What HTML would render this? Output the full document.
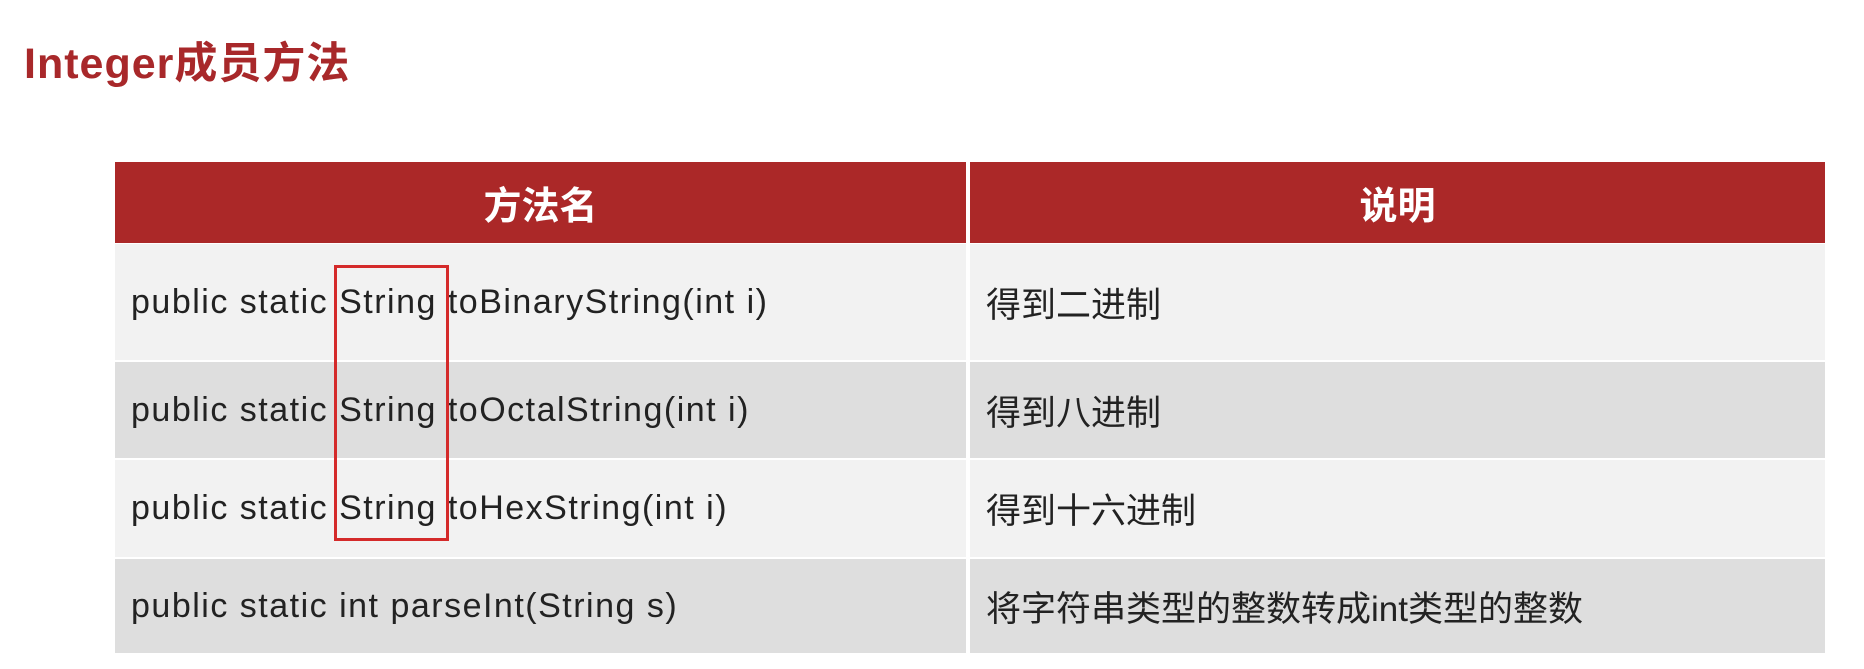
<!DOCTYPE html>
<html><head><meta charset="utf-8"><style>
body{margin:0;width:1864px;height:669px;background:#fff;overflow:hidden;position:relative;font-family:"Liberation Sans","Noto Sans CJK SC",sans-serif}
.title{position:absolute;left:24px;top:29px;font-size:43px;font-weight:bold;color:#a8282a;letter-spacing:1px}
.c{position:absolute;display:flex;align-items:center;box-sizing:border-box}
.h{background:#ab2828;color:#fff;font-size:38px;font-weight:bold;justify-content:center}
.l{background:#f2f2f2}.d{background:#dedede}
.t1{font-size:34px;letter-spacing:1.5px;padding-left:16px;color:#222}
.t2{font-size:35px;padding-left:16px;color:#222}
.box{position:absolute;left:334px;top:265px;width:115px;height:276px;border:3px solid #d42a2a;box-sizing:border-box}
</style></head><body>
<div class="title">Integer成员方法</div>
<div class="c h" style="left:115px;top:162px;width:851px;height:81px">方法名</div>
<div class="c h" style="left:970px;top:162px;width:855px;height:81px">说明</div>

<div class="c l t1" style="left:115px;top:244px;width:851px;height:116px">public static String toBinaryString(int i)</div>
<div class="c l t2" style="left:970px;top:244px;width:855px;height:116px">得到二进制</div>

<div class="c d t1" style="left:115px;top:362px;width:851px;height:96px">public static String toOctalString(int i)</div>
<div class="c d t2" style="left:970px;top:362px;width:855px;height:96px">得到八进制</div>

<div class="c l t1" style="left:115px;top:460px;width:851px;height:97px">public static String toHexString(int i)</div>
<div class="c l t2" style="left:970px;top:460px;width:855px;height:97px">得到十六进制</div>

<div class="c d t1" style="left:115px;top:559px;width:851px;height:94px">public static int parseInt(String s)</div>
<div class="c d t2" style="left:970px;top:559px;width:855px;height:94px">将字符串类型的整数转成int类型的整数</div>
<div class="box"></div>
</body></html>
